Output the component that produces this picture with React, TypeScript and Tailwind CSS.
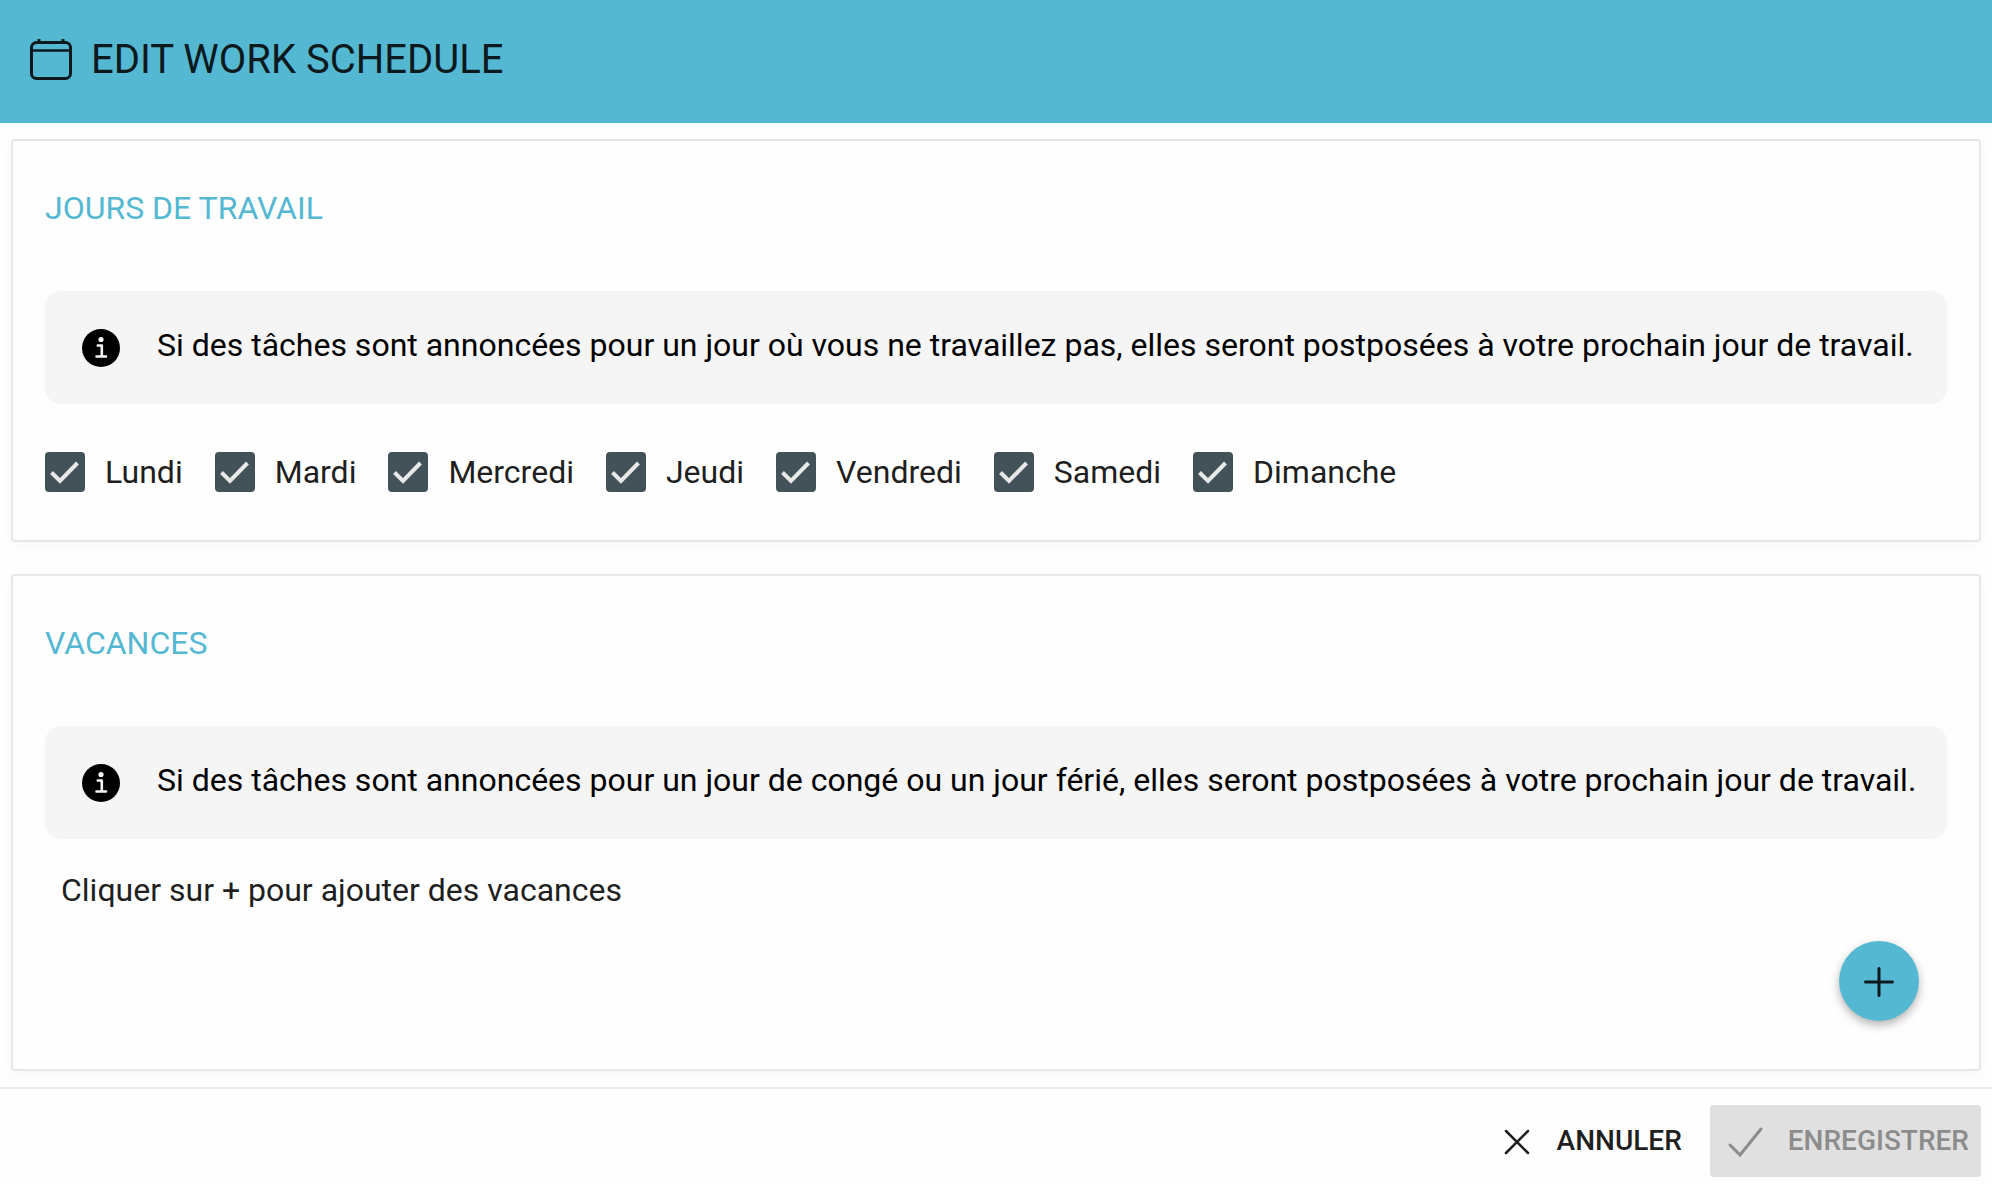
import type { ReactNode } from "react";

const days = ["Lundi", "Mardi", "Mercredi", "Jeudi", "Vendredi", "Samedi", "Dimanche"];

function CalendarIcon() {
  return (
    <svg className="h-12 w-12" viewBox="0 0 48 48" fill="none" stroke="currentColor" strokeWidth="3" aria-hidden="true">
      <rect x="4.5" y="6.5" width="39" height="36" rx="5" />
      <path d="M4 14.5h40" strokeWidth="2.5" />
      <path d="M12 3v4M36 3v4" />
    </svg>
  );
}

function InfoIcon() {
  return (
    <svg className="h-[38px] w-[38px] shrink-0" viewBox="0 0 38 38" aria-hidden="true">
      <circle cx="19" cy="19" r="19" />
      <circle cx="19" cy="10.5" r="2.6" fill="#f5f5f5" />
      <path d="M15.8 16.5h4v11M14.5 27.5h9.5" stroke="#f5f5f5" strokeWidth="2.6" strokeLinejoin="round" fill="none" strokeLinecap="round" />
    </svg>
  );
}

function Card({ title, children }: { title: string; children: ReactNode }) {
  return (
    <section className="rounded border-2 border-[#e7e7e7] px-8 shadow-[0_4px_12px_rgba(0,0,0,0.03)]">
      <h2 className="pt-[47px] text-[32px] leading-10 text-[#55b8d2] uppercase">{title}</h2>
      {children}
    </section>
  );
}

function Notice({ children }: { children: ReactNode }) {
  return (
    <div className="mt-[63px] flex items-center gap-[37px] rounded-2xl bg-[#f5f5f5] py-8 pr-6 pl-[37px] text-black">
      <InfoIcon />
      <p className="pb-1 text-[32px] leading-[45px]">{children}</p>
    </div>
  );
}

function DayCheckbox({ label }: { label: string }) {
  return (
    <label className="flex items-center gap-5">
      <span className="grid h-10 w-10 shrink-0">
        <input type="checkbox" defaultChecked className="peer col-start-1 row-start-1 h-10 w-10 appearance-none rounded border-4 border-[#435159] checked:bg-[#435159]" />
        <svg className="pointer-events-none invisible col-start-1 row-start-1 h-10 w-10 peer-checked:visible" viewBox="0 0 40 40" fill="none" stroke="#e8e8e8" strokeWidth="4" aria-hidden="true">
          <path d="M6.5 20.5 15 29 32.5 11" />
        </svg>
      </span>
      {label}
    </label>
  );
}

export default function App() {
  return (
    <div className="flex min-h-screen flex-col bg-[#fefefe] font-['Roboto',sans-serif] text-[#1f1f1f]">
      <header className="flex items-center gap-4 bg-[#55b8d2] px-[27px] pt-[34px] pb-[37px] text-[#0c1a1e]">
        <CalendarIcon />
        <h1 className="text-[40px] leading-[52px] uppercase">Edit work schedule</h1>
      </header>

      <main className="flex flex-1 flex-col gap-8 px-[11px] py-4">
        <Card title="Jours de travail">
          <Notice>Si des tâches sont annoncées pour un jour où vous ne travaillez pas, elles seront postposées à votre prochain jour de travail.</Notice>
          <div className="flex flex-wrap gap-x-8 gap-y-4 py-12 text-[32px] leading-10">
            {days.map((day) => (
              <DayCheckbox key={day} label={day} />
            ))}
          </div>
        </Card>

        <Card title="Vacances">
          <Notice>Si des tâches sont annoncées pour un jour de congé ou un jour férié, elles seront postposées à votre prochain jour de travail.</Notice>
          <p className="px-4 pt-[31px] text-[32px] leading-10">Cliquer sur + pour ajouter des vacances</p>
          <div className="flex justify-end px-7 pt-[31px] pb-12">
            <button type="button" aria-label="Ajouter des vacances" className="grid h-20 w-20 place-items-center rounded-full bg-[#55b8d2] text-[#0c1a1e] shadow-[0_4px_10px_rgba(0,0,0,0.3)]">
              <svg className="h-10 w-10" viewBox="0 0 40 40" fill="none" stroke="currentColor" strokeWidth="3" strokeLinecap="round" aria-hidden="true">
                <path d="M20 7.5v27M6.5 21h27" />
              </svg>
            </button>
          </div>
        </Card>
      </main>

      <footer className="flex items-center justify-end gap-4 border-t-2 border-[#ececec] px-[11px] pt-4 pb-[7px] text-[28px] leading-10 font-medium">
        <button type="button" className="flex h-18 items-center gap-[26px] rounded px-3 uppercase">
          <svg className="h-7 w-7" viewBox="0 0 28 28" fill="none" stroke="currentColor" strokeWidth="2.5" strokeLinecap="round" aria-hidden="true">
            <path d="M3 4l22 22M25 4L3 26" />
          </svg>
          Annuler
        </button>
        <button type="button" disabled className="flex h-18 items-center gap-6 rounded bg-[#e0e0e0] pr-3 pl-3.5 text-[#8c8c8c] uppercase">
          <svg className="h-10 w-10" viewBox="0 0 40 40" fill="none" stroke="currentColor" strokeWidth="3" strokeLinecap="round" aria-hidden="true">
            <path d="M6 24l10 10L37 8" />
          </svg>
          Enregistrer
        </button>
      </footer>
    </div>
  );
}
